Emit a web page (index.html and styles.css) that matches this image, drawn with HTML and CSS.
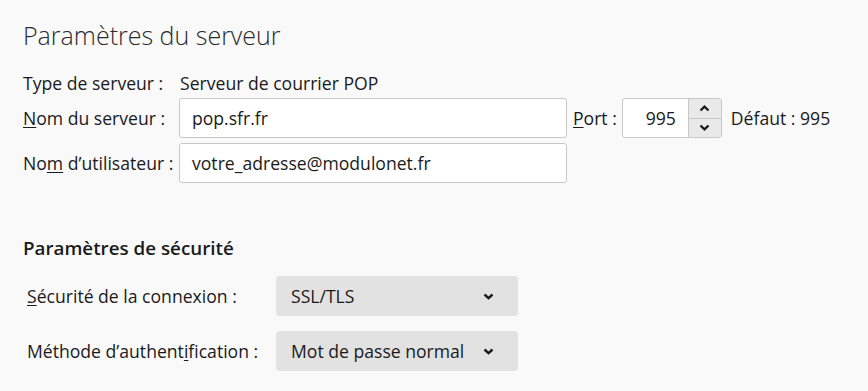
FILE: index.html
```html
<!DOCTYPE html>
<html lang="fr">
<head>
<meta charset="utf-8">
<title>Paramètres du serveur</title>
<link rel="stylesheet" href="styles.css">
</head>
<body>
<main class="page">
  <h1 class="title">Paramètres du serveur</h1>
  <div class="server-grid">
    <span class="label">Type de serveur :</span>
    <span class="value">Serveur de courrier POP</span>

    <label class="label"><u>N</u>om du serveur :</label>
    <div class="row">
      <div class="input wide">pop.sfr.fr</div>
      <label class="port-label"><u>P</u>ort :</label>
      <div class="input port">
        <span class="port-value">995</span>
        <div class="spinner">
          <span class="spin up"><svg width="11" height="7" viewBox="0 0 11 7"><path d="M1.5 5.5 L5.5 1.7 L9.5 5.5" fill="none" stroke="#1a1a1a" stroke-width="2.3"/></svg></span>
          <span class="spin down"><svg width="11" height="7" viewBox="0 0 11 7"><path d="M1.5 1.5 L5.5 5.3 L9.5 1.5" fill="none" stroke="#1a1a1a" stroke-width="2.3"/></svg></span>
        </div>
      </div>
      <span class="default">Défaut : 995</span>
    </div>

    <label class="label">No<u>m</u> d’utilisateur :</label>
    <div class="row">
      <div class="input wide">votre_adresse@modulonet.fr</div>
    </div>
  </div>

  <h2 class="subtitle">Paramètres de sécurité</h2>
  <div class="sec-grid">
    <label class="label"><u>S</u>écurité de la connexion :</label>
    <div class="select">
      <span>SSL/TLS</span>
      <svg class="chev" width="11" height="7" viewBox="0 0 11 7"><path d="M1.5 1.5 L5.5 5.2 L9.5 1.5" fill="none" stroke="#1a1a1a" stroke-width="2.4"/></svg>
    </div>
    <label class="label">Méthode d’authent<u>i</u>fication :</label>
    <div class="select">
      <span>Mot de passe normal</span>
      <svg class="chev" width="11" height="7" viewBox="0 0 11 7"><path d="M1.5 1.5 L5.5 5.2 L9.5 1.5" fill="none" stroke="#1a1a1a" stroke-width="2.4"/></svg>
    </div>
  </div>
</main>
</body>
</html>
```

FILE: styles.css
```css
html, body {
  margin: 0;
  padding: 0;
  background: #f9f9fa;
}

body {
  font-family: "Open Sans", "Noto Sans", sans-serif;
  font-size: 17.6px;
  color: #1a1a1a;
}

.page {
  padding: 0 0 0 23px;
}

.title {
  margin: 0;
  padding-top: 18px;
  font-size: 25px;
  font-weight: 300;
  line-height: 34px;
  color: #2b2b2b;
}

.server-grid {
  margin-top: 21px;
  display: grid;
  grid-template-columns: 156px auto;
  row-gap: 5px;
  align-items: center;
}

.label {
  line-height: 20px;
  white-space: nowrap;
}

.label u, .port-label u {
  text-underline-offset: 2px;
}

.value {
  padding-left: 1px;
  line-height: 20px;
}

.row {
  display: flex;
  align-items: center;
}

.input {
  box-sizing: border-box;
  height: 40px;
  background: #fff;
  border: 1px solid #c8c8c8;
  border-radius: 3px;
  display: flex;
  align-items: center;
}

.wide {
  width: 388px;
  padding-left: 12px;
}

.port-label {
  margin-left: 6px;
  margin-right: 5px;
  white-space: nowrap;
}

.port {
  width: 100px;
  justify-content: flex-end;
  overflow: hidden;
}

.port-value {
  margin-right: 12px;
}

.spinner {
  align-self: stretch;
  width: 32px;
  display: flex;
  flex-direction: column;
  border-left: 1px solid #c8c8c8;
  background: #e9e9ea;
}

.spin {
  flex: 1;
  display: flex;
  align-items: center;
  justify-content: center;
}

.spin.up {
  border-bottom: 1px solid #c8c8c8;
}

.default {
  margin-left: 9px;
  white-space: nowrap;
}

.subtitle {
  margin: 52px 0 0 0;
  font-size: 18.8px;
  font-weight: 600;
  line-height: 26px;
  color: #1a1a1a;
}

.sec-grid {
  margin-top: 15px;
  padding-left: 4px;
  display: grid;
  grid-template-columns: 249px 242px;
  row-gap: 15px;
  align-items: center;
}

.select {
  box-sizing: border-box;
  height: 40px;
  background: #e2e2e3;
  border-radius: 4px;
  display: flex;
  align-items: center;
  justify-content: space-between;
  padding: 0 24px 0 15px;
}

.chev {
  display: block;
}
```
